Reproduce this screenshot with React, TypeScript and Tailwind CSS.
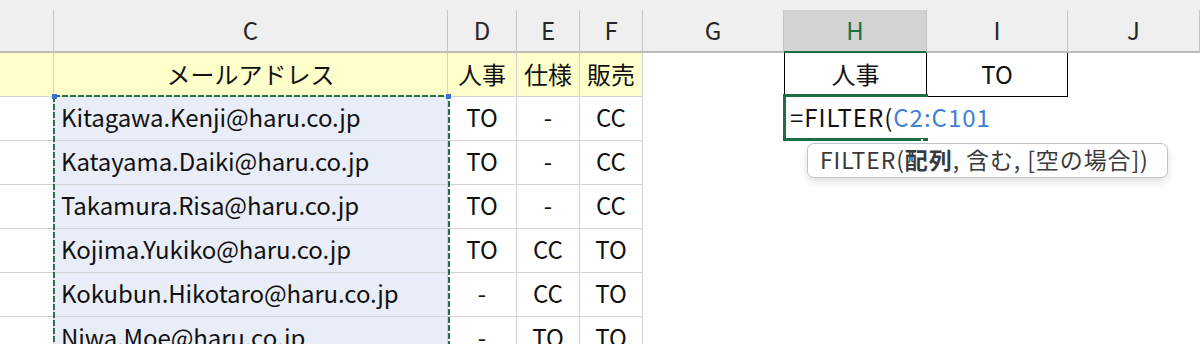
import React from 'react';

const font = "font-['Noto_Sans_CJK_JP','Noto_Sans',sans-serif]";

const letters = ['', 'C', 'D', 'E', 'F', 'G', 'H', 'I', 'J'];

const rows = [
  ['Kitagawa.Kenji@haru.co.jp', 'TO', '-', 'CC'],
  ['Katayama.Daiki@haru.co.jp', 'TO', '-', 'CC'],
  ['Takamura.Risa@haru.co.jp', 'TO', '-', 'CC'],
  ['Kojima.Yukiko@haru.co.jp', 'TO', 'CC', 'TO'],
  ['Kokubun.Hikotaro@haru.co.jp', '-', 'CC', 'TO'],
  ['Niwa.Moe@haru.co.jp', '-', 'TO', 'TO'],
];

const gridCols = 'grid grid-cols-[54px_394px_69px_63px_63px_141px_143px_141px_1fr]';
const line = 'border-r border-b border-[#d2d2d2]';

function HeaderRow() {
  return (
    <div className="bg-[#efefef] pt-[10px]">
      <div className={gridCols}>
        {letters.map((l, i) =>
          l === 'H' ? (
            <div
              key={i}
              className="h-[43px] pb-[1px] flex items-center justify-center bg-[#d3d3d3] border-r border-[#c4c4c4] border-b-2 border-b-[#1e6e42] text-[#1e7145] text-[24px]"
            >
              {l}
            </div>
          ) : (
            <div
              key={i}
              className="h-[43px] pb-[1px] flex items-center justify-center border-r border-[#c4c4c4] border-b-2 border-b-[#bcbcbc] text-[#262626] text-[24px]"
            >
              {l}
            </div>
          )
        )}
      </div>
    </div>
  );
}

function TitleRow() {
  return (
    <div className={gridCols}>
      <div className={`h-[44px] bg-[#ffffcc] ${line}`} />
      <div className={`h-[44px] pb-[2px] bg-[#ffffcc] ${line} flex items-center justify-center`}>メールアドレス</div>
      <div className={`h-[44px] pb-[2px] bg-[#ffffcc] ${line} flex items-center justify-center`}>人事</div>
      <div className={`h-[44px] pb-[2px] bg-[#ffffcc] ${line} flex items-center justify-center`}>仕様</div>
      <div className={`h-[44px] pb-[2px] bg-[#ffffcc] ${line} flex items-center justify-center`}>販売</div>
      <div className="h-[44px]" />
      <div className="h-[44px] pb-[2px] border-l border-r border-b border-black flex items-center justify-center">人事</div>
      <div className="h-[44px] pb-[2px] border-r border-b border-black flex items-center justify-center">TO</div>
      <div className="h-[44px]" />
    </div>
  );
}

function DataRow({ cells, first }: { cells: string[]; first: boolean }) {
  return (
    <div className={gridCols}>
      <div className={`h-[44px] ${line}`} />
      <div className={`h-[44px] pb-[3px] bg-[#e9edf8] ${line} flex items-center pl-[7px] tracking-[-0.1px]`}>{cells[0]}</div>
      {cells.slice(1).map((c, i) => (
        <div key={i} className={`h-[44px] pb-[3px] ${line} flex items-center justify-center`}>
          {c}
        </div>
      ))}
      <div className="h-[44px]" />
      <div className="h-[44px] relative">
        {first && (
          <div className="absolute left-[6px] top-0 h-full pb-[4px] flex items-center whitespace-nowrap tracking-[1px]">
            <span>=FILTER(</span>
            <span className="text-[#3f7fd8]">C2:C101</span>
          </div>
        )}
      </div>
      <div className="h-[44px]" />
      <div className="h-[44px]" />
    </div>
  );
}

export default function App() {
  return (
    <div className={`relative w-[1200px] h-[344px] overflow-hidden bg-white text-[24px] text-[#111] ${font}`}>
      <HeaderRow />
      <TitleRow />
      {rows.map((r, i) => (
        <DataRow key={i} cells={r} first={i === 0} />
      ))}

      {/* copy range marching ants */}
      <svg className="absolute left-[53px] top-[95px]" width="397" height="260">
        <rect x="1" y="1" width="395" height="300" fill="none" stroke="#217346" strokeWidth="2" strokeDasharray="6 2" />
      </svg>
      <div className="absolute left-[52px] top-[94px] w-[5px] h-[5px] bg-[#3b6fd0]" />
      <div className="absolute left-[446px] top-[94px] w-[5px] h-[5px] bg-[#3b6fd0]" />

      {/* active cell */}
      <div className="absolute left-[783px] top-[94px] w-[145px] h-[47px] border-l-[3px] border-t-[3px] border-b-[3px] border-[#1e6e42]" />
      <div className="absolute left-[921px] top-[139px] w-[2px] h-[3px] bg-white" />

      {/* function tooltip */}
      <div className="absolute left-[807px] top-[143px] w-[361px] h-[35px] pb-[2px] rounded-[7px] border-[1.5px] border-[#c2c2c2] bg-white shadow-[0_4px_8px_rgba(0,0,0,0.12)] flex items-center pl-[12px] text-[23px] tracking-[0.9px] text-[#3a3a3a] whitespace-nowrap">
        FILTER(<span className="font-bold">配列</span>, 含む, [空の場合])
      </div>
    </div>
  );
}
